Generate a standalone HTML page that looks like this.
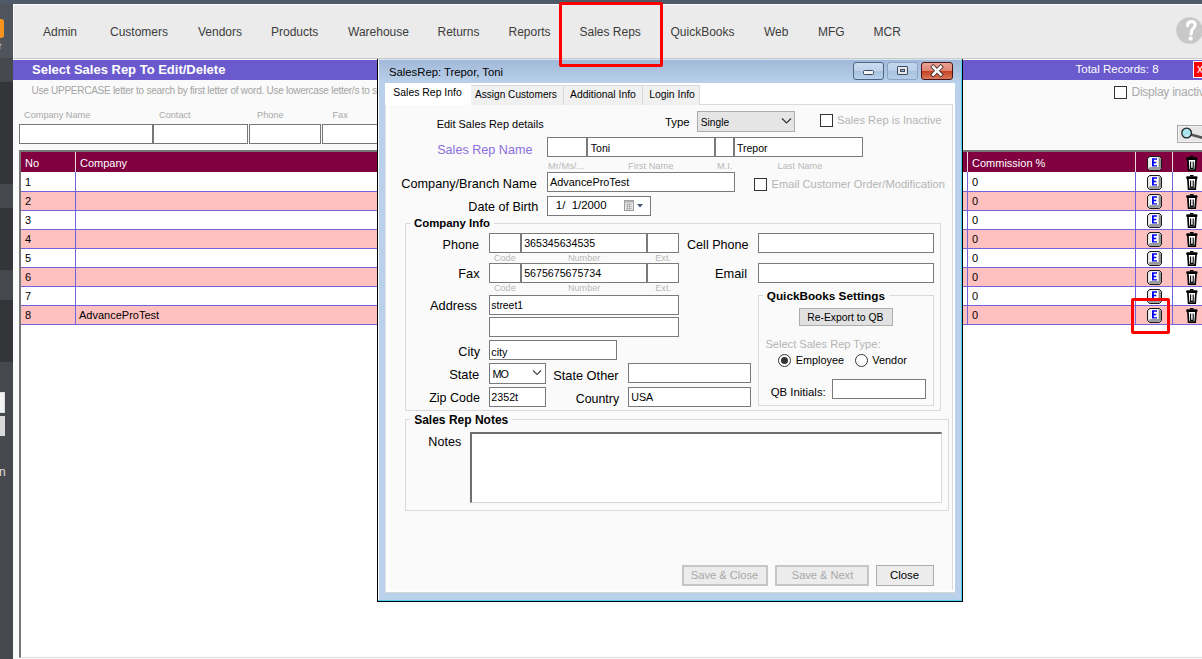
<!DOCTYPE html>
<html><head><meta charset="utf-8">
<style>
*{box-sizing:border-box;margin:0;padding:0}
html,body{width:1202px;height:659px;overflow:hidden;background:#fafafa;font-family:"Liberation Sans",sans-serif;position:relative}
.a{position:absolute}
.t{position:absolute;white-space:pre;line-height:1}
.inp{position:absolute;background:#fff;border:1px solid #7a7a7a}
</style></head><body>

<!-- top bar -->
<div class="a" style="left:0;top:0;width:1202px;height:4px;background:#4f5a69"></div>
<!-- sidebar -->
<div class="a" style="left:0;top:4px;width:13px;height:655px;background:#50545c"></div>
<div class="a" style="left:0;top:58px;width:13px;height:24px;background:#45484d"></div>
<div class="a" style="left:0;top:82px;width:13px;height:102px;background:#333538"></div>
<div class="a" style="left:0;top:184px;width:13px;height:24px;background:#45484d"></div>
<div class="a" style="left:0;top:208px;width:13px;height:62px;background:#333538"></div>
<div class="a" style="left:0;top:270px;width:13px;height:30px;background:#45484d"></div>
<div class="a" style="left:0;top:300px;width:13px;height:62px;background:#333538"></div>
<div class="a" style="left:0;top:362px;width:13px;height:297px;background:#45484d"></div>
<div class="a" style="left:-4px;top:19px;width:8px;height:19px;background:#f7941d;border-radius:3px"></div>
<div class="t" style="left:-4px;top:41px;font-size:10px;color:#bbb">e</div>
<div class="a" style="left:-2px;top:392px;width:7px;height:21px;background:#f4f4f4;border:1px solid #ddd"></div>
<div class="a" style="left:-2px;top:416px;width:7px;height:20px;background:#d8d8d8"></div>
<div class="t" style="left:-1px;top:466px;font-size:12px;color:#e0e0e0">n</div>

<!-- nav -->
<div class="a" style="left:13px;top:4px;width:1189px;height:55px;background:#ebebeb;border-top:1px solid #fff;border-left:1px solid #fff;border-bottom:1px solid #c9c9c9"></div>
<div class="t" style="left:43px;top:26px;font-size:12px;color:#3c3c3c">Admin</div>
<div class="t" style="left:110px;top:26px;font-size:12px;color:#3c3c3c">Customers</div>
<div class="t" style="left:198px;top:26px;font-size:12px;color:#3c3c3c">Vendors</div>
<div class="t" style="left:271px;top:26px;font-size:12px;color:#3c3c3c">Products</div>
<div class="t" style="left:348px;top:26px;font-size:12px;color:#3c3c3c">Warehouse</div>
<div class="t" style="left:437.5px;top:26px;font-size:12px;color:#3c3c3c">Returns</div>
<div class="t" style="left:508.5px;top:26px;font-size:12px;color:#3c3c3c">Reports</div>
<div class="t" style="left:579.5px;top:26px;font-size:12px;color:#3c3c3c">Sales Reps</div>
<div class="t" style="left:670.5px;top:26px;font-size:12px;color:#3c3c3c">QuickBooks</div>
<div class="t" style="left:764px;top:26px;font-size:12px;color:#3c3c3c">Web</div>
<div class="t" style="left:818px;top:26px;font-size:12px;color:#3c3c3c">MFG</div>
<div class="t" style="left:873.5px;top:26px;font-size:12px;color:#3c3c3c">MCR</div>
<svg class="a" style="left:1176px;top:17px" width="27" height="27" viewBox="0 0 27 27"><circle cx="13.5" cy="13.5" r="13.3" fill="#c8c8c8"/><path d="M11.6,8.6 C11.6,5.8 13.4,4.6 15.6,4.6 C17.9,4.6 19.1,6.1 19.1,8.1 C19.1,10.6 16.6,11.6 15.7,13.6 L15.1,17.3" fill="none" stroke="#fff" stroke-width="3.1" stroke-linecap="round"/><circle cx="14.6" cy="21.6" r="2.1" fill="#fff"/></svg>

<!-- purple band -->
<div class="a" style="left:13px;top:60px;width:1189px;height:20px;background:#6a5acd"></div>
<div class="t" style="left:32px;top:63px;font-size:13px;font-weight:700;color:#fff">Select Sales Rep To Edit/Delete</div>
<div class="t" style="left:1075.5px;top:64px;font-size:11.5px;color:#fff">Total Records: 8</div>
<div class="a" style="left:1193px;top:61px;width:12px;height:17px;background:#f00;border:1px solid #fff"></div>

<!-- hint and filters -->
<div class="t" style="left:31.5px;top:86px;font-size:10px;letter-spacing:-0.26px;color:#a4a4a4">Use UPPERCASE letter to search by first letter of word. Use lowercase letter/s to search</div>
<div class="a" style="left:1114px;top:86px;width:13px;height:13px;border:1px solid #333;background:#fff"></div>
<div class="t" style="left:1131.5px;top:86px;font-size:12px;letter-spacing:-0.25px;color:#aaa">Display inactive</div>
<div class="t" style="left:24px;top:111px;font-size:9.2px;color:#a8a8a8">Company Name</div>
<div class="t" style="left:159px;top:111px;font-size:9.2px;color:#a8a8a8">Contact</div>
<div class="t" style="left:257px;top:111px;font-size:9.2px;color:#a8a8a8">Phone</div>
<div class="t" style="left:332.5px;top:111px;font-size:9.2px;color:#a8a8a8">Fax</div>
<div class="inp" style="left:19px;top:124px;width:134px;height:20px;border-color:#777"></div>
<div class="inp" style="left:153px;top:124px;width:95px;height:20px;border-color:#777"></div>
<div class="inp" style="left:249px;top:124px;width:72px;height:20px;border-color:#777"></div>
<div class="inp" style="left:322px;top:124px;width:60px;height:20px;border-color:#777"></div>
<div class="a" style="left:1177px;top:125px;width:30px;height:18px;background:#e6e6e6;border:1px solid #a8a8a8;box-shadow:inset 0 0 0 1px #f2f2f2"></div>

<!-- table -->
<div id="table" class="a" style="left:19px;top:150px;width:1190px;height:508px;border-left:2px solid #777;border-top:2px solid #777;border-bottom:1px solid #ddd;background:#fff"></div>
<svg width="0" height="0" style="position:absolute"><defs>
<g id="ek"><path d="M2.5,0.5 H12.5 L14.5,2.5 V12.5 L12.5,14.5 H2.5 L0.5,12.5 V2.5 Z" fill="#b8b8b8" stroke="#1a1a1a" stroke-width="1"/>
<path d="M1.2,3 L3.5,1.2 L3.5,11 L1.2,12.5 Z" fill="#f2f2f2"/>
<path d="M11.5,1.2 L13.8,3 L13.8,12.5 L11.5,11 Z" fill="#8c8c8c"/>
<path d="M1.2,12.5 L3.5,11 L11.5,11 L13.8,12.5 L12.3,13.8 L2.7,13.8 Z" fill="#9a9a9a"/>
<rect x="3.5" y="1.2" width="8" height="9.8" fill="#fff"/>
<path d="M5,2.3 H10 V3.8 H6.8 V5.8 H9.3 V7.2 H6.8 V9.2 H10 V10.5 H5 Z" fill="#0000f0"/></g>
<g id="tr"><rect x="4" y="0" width="3.5" height="1.4" fill="#000"/>
<rect x="0.2" y="1.3" width="11.3" height="2.6" rx="1" fill="#000"/>
<path d="M1.9,3.9 L2.6,14.2 H9.2 L10,3.9" fill="#fff" stroke="#000" stroke-width="1.7"/>
<path d="M4.6,5.6 V12.4 H7.2 V5.6" fill="none" stroke="#000" stroke-width="1.1"/></g>
</defs></svg>
<div class="a" style="left:21px;top:152px;width:1181px;height:20px;background:#800040"></div>
<div class="a" style="left:75px;top:152px;width:1px;height:20px;background:#f0d8e0"></div>
<div class="a" style="left:967px;top:152px;width:1px;height:20px;background:#f0d8e0"></div>
<div class="a" style="left:1135px;top:152px;width:1px;height:20px;background:#f0d8e0"></div>
<div class="a" style="left:1172px;top:152px;width:1px;height:20px;background:#f0d8e0"></div>
<div class="t" style="left:25px;top:158px;font-size:11px;color:#fff">No</div>
<div class="t" style="left:80px;top:158px;font-size:11px;color:#fff">Company</div>
<div class="t" style="left:972px;top:158px;font-size:11px;color:#fff">Commission %</div>
<div class="a" style="left:21px;top:172px;width:1181px;height:19px;background:#fff"></div>
<div class="a" style="left:21px;top:191px;width:1181px;height:19px;background:#ffc0c0"></div>
<div class="a" style="left:21px;top:210px;width:1181px;height:19px;background:#fff"></div>
<div class="a" style="left:21px;top:229px;width:1181px;height:19px;background:#ffc0c0"></div>
<div class="a" style="left:21px;top:248px;width:1181px;height:19px;background:#fff"></div>
<div class="a" style="left:21px;top:267px;width:1181px;height:19px;background:#ffc0c0"></div>
<div class="a" style="left:21px;top:286px;width:1181px;height:19px;background:#fff"></div>
<div class="a" style="left:21px;top:305px;width:1181px;height:19px;background:#ffc0c0"></div>
<div class="a" style="left:21px;top:191px;width:1181px;height:1px;background:#7262dc"></div>
<div class="t" style="left:25px;top:177px;font-size:11px;color:#000">1</div>
<div class="t" style="left:972px;top:177px;font-size:11px;color:#000">0</div>
<div class="a" style="left:21px;top:210px;width:1181px;height:1px;background:#7262dc"></div>
<div class="t" style="left:25px;top:196px;font-size:11px;color:#000">2</div>
<div class="t" style="left:972px;top:196px;font-size:11px;color:#000">0</div>
<div class="a" style="left:21px;top:229px;width:1181px;height:1px;background:#7262dc"></div>
<div class="t" style="left:25px;top:215px;font-size:11px;color:#000">3</div>
<div class="t" style="left:972px;top:215px;font-size:11px;color:#000">0</div>
<div class="a" style="left:21px;top:248px;width:1181px;height:1px;background:#7262dc"></div>
<div class="t" style="left:25px;top:234px;font-size:11px;color:#000">4</div>
<div class="t" style="left:972px;top:234px;font-size:11px;color:#000">0</div>
<div class="a" style="left:21px;top:267px;width:1181px;height:1px;background:#7262dc"></div>
<div class="t" style="left:25px;top:253px;font-size:11px;color:#000">5</div>
<div class="t" style="left:972px;top:253px;font-size:11px;color:#000">0</div>
<div class="a" style="left:21px;top:286px;width:1181px;height:1px;background:#7262dc"></div>
<div class="t" style="left:25px;top:272px;font-size:11px;color:#000">6</div>
<div class="t" style="left:972px;top:272px;font-size:11px;color:#000">0</div>
<div class="a" style="left:21px;top:305px;width:1181px;height:1px;background:#7262dc"></div>
<div class="t" style="left:25px;top:291px;font-size:11px;color:#000">7</div>
<div class="t" style="left:972px;top:291px;font-size:11px;color:#000">0</div>
<div class="a" style="left:21px;top:324px;width:1181px;height:1px;background:#7262dc"></div>
<div class="t" style="left:25px;top:310px;font-size:11px;color:#000">8</div>
<div class="t" style="left:972px;top:310px;font-size:11px;color:#000">0</div>
<div class="t" style="left:79px;top:310px;font-size:11px;color:#000">AdvanceProTest</div>
<div class="a" style="left:75px;top:172px;width:1px;height:152px;background:#7262dc"></div>
<div class="a" style="left:967px;top:172px;width:1px;height:152px;background:#7262dc"></div>
<div class="a" style="left:1135px;top:172px;width:1px;height:152px;background:#7262dc"></div>
<div class="a" style="left:1172px;top:172px;width:1px;height:152px;background:#7262dc"></div>
<svg class="a" style="left:1147px;top:156px" width="15" height="15" viewBox="0 0 15 15"><use href="#ek"/></svg>
<svg class="a" style="left:1186px;top:156px" width="12" height="15" viewBox="0 0 12 15"><use href="#tr"/></svg>
<svg class="a" style="left:1147px;top:175px" width="15" height="15" viewBox="0 0 15 15"><use href="#ek"/></svg>
<svg class="a" style="left:1186px;top:175px" width="12" height="15" viewBox="0 0 12 15"><use href="#tr"/></svg>
<svg class="a" style="left:1147px;top:194px" width="15" height="15" viewBox="0 0 15 15"><use href="#ek"/></svg>
<svg class="a" style="left:1186px;top:194px" width="12" height="15" viewBox="0 0 12 15"><use href="#tr"/></svg>
<svg class="a" style="left:1147px;top:213px" width="15" height="15" viewBox="0 0 15 15"><use href="#ek"/></svg>
<svg class="a" style="left:1186px;top:213px" width="12" height="15" viewBox="0 0 12 15"><use href="#tr"/></svg>
<svg class="a" style="left:1147px;top:232px" width="15" height="15" viewBox="0 0 15 15"><use href="#ek"/></svg>
<svg class="a" style="left:1186px;top:232px" width="12" height="15" viewBox="0 0 12 15"><use href="#tr"/></svg>
<svg class="a" style="left:1147px;top:251px" width="15" height="15" viewBox="0 0 15 15"><use href="#ek"/></svg>
<svg class="a" style="left:1186px;top:251px" width="12" height="15" viewBox="0 0 12 15"><use href="#tr"/></svg>
<svg class="a" style="left:1147px;top:270px" width="15" height="15" viewBox="0 0 15 15"><use href="#ek"/></svg>
<svg class="a" style="left:1186px;top:270px" width="12" height="15" viewBox="0 0 12 15"><use href="#tr"/></svg>
<svg class="a" style="left:1147px;top:289px" width="15" height="15" viewBox="0 0 15 15"><use href="#ek"/></svg>
<svg class="a" style="left:1186px;top:289px" width="12" height="15" viewBox="0 0 12 15"><use href="#tr"/></svg>
<svg class="a" style="left:1147px;top:308px" width="15" height="15" viewBox="0 0 15 15"><use href="#ek"/></svg>
<svg class="a" style="left:1186px;top:308px" width="12" height="15" viewBox="0 0 12 15"><use href="#tr"/></svg>
<!--ICONS-->
<!-- dialog frame -->
<div class="a" style="left:377px;top:59px;width:586px;height:543px;background:#b9d1ea;border-left:1px solid #000;border-right:1px solid #000;border-bottom:1px solid #000"></div>
<div class="a" style="left:378px;top:59px;width:1px;height:542px;background:#fff"></div>
<div class="a" style="left:961px;top:60px;width:1px;height:541px;background:#4fd0f0"></div>
<div class="a" style="left:378px;top:600px;width:584px;height:1px;background:#4fd0f0"></div>
<div class="a" style="left:379px;top:60px;width:582px;height:23px;background:linear-gradient(#a1b9d8,#bad1eb)"></div>
<div class="a" style="left:378px;top:59px;width:584px;height:1px;background:#d8e4f2"></div>
<div class="t" style="left:389px;top:66.5px;font-size:11.3px;color:#000">SalesRep: Trepor, Toni</div>
<!-- title buttons -->
<div class="a" style="left:853px;top:62px;width:31px;height:18px;border:1px solid #4c6283;border-radius:3px;background:linear-gradient(#cadcf0 0,#bcd2ea 50%,#a6c0de 51%,#b8d0ea 100%)"></div>
<div class="a" style="left:863px;top:70px;width:11px;height:5px;background:#f4f4f4;border:1px solid #3a4a60;border-radius:1.5px"></div>
<div class="a" style="left:887px;top:62px;width:31px;height:18px;border:1px solid #8aa3c4;border-radius:3px;background:linear-gradient(#c4d7ed 0,#b9cfe8 50%,#a9c2df 51%,#b7cee8 100%)"></div>
<div class="a" style="left:897px;top:66px;width:11px;height:9px;background:#e6e6e6;border:1px solid #3a4a60;border-radius:1px"></div>
<div class="a" style="left:900px;top:69px;width:5px;height:3px;background:#9fb7d6;border:1px solid #3a4a60"></div>
<div class="a" style="left:921px;top:62px;width:32px;height:18px;border:1px solid #4a1414;border-radius:3px;background:linear-gradient(#e9a394 0,#dc8470 50%,#c4401f 51%,#d77a5e 100%)"></div>
<svg class="a" style="left:929px;top:64px" width="16" height="14" viewBox="0 0 16 14"><path d="M4.2,3 L11.8,10.6 M11.8,3 L4.2,10.6" stroke="#3a1e1e" stroke-width="4.2" stroke-linecap="square"/><path d="M4.2,3 L11.8,10.6 M11.8,3 L4.2,10.6" stroke="#fafafa" stroke-width="2.7" stroke-linecap="square"/></svg>

<!-- client area -->
<div class="a" style="left:385px;top:83px;width:570px;height:510px;background:#fff;border-left:1px solid #e0e0e0;border-bottom:1px solid #d6d6d6"></div>
<div class="a" style="left:389px;top:104px;width:564px;height:486px;background:#fafafa;border-top:1px solid #d9d9d9;border-right:1px solid #d9d9d9"></div>
<!-- tabs -->
<div class="a" style="left:470px;top:85px;width:94px;height:20px;background:#f0f0f0;border:1px solid #d9d9d9;border-bottom:none"></div>
<div class="a" style="left:563px;top:85px;width:80px;height:20px;background:#f0f0f0;border:1px solid #d9d9d9;border-bottom:none"></div>
<div class="a" style="left:642px;top:85px;width:58px;height:20px;background:#f0f0f0;border:1px solid #d9d9d9;border-bottom:none"></div>
<div class="a" style="left:385px;top:83px;width:86px;height:22px;background:#fff"></div>
<div class="t" style="left:393.3px;top:88px;font-size:10.45px;color:#000">Sales Rep Info</div>
<div class="t" style="left:475px;top:90px;font-size:10.1px;color:#000">Assign Customers</div>
<div class="t" style="left:570px;top:90px;font-size:10.4px;color:#000">Additional Info</div>
<div class="t" style="left:649.2px;top:90px;font-size:10.4px;color:#000">Login Info</div>

<!-- row: edit details / type -->
<div class="t" style="left:436.7px;top:119px;font-size:10.95px;color:#000">Edit Sales Rep details</div>
<div class="t" style="left:665px;top:117px;font-size:11.4px;color:#000">Type</div>
<div class="a" style="left:697px;top:111px;width:98px;height:21px;background:#e5e5e5;border:1px solid #acacac"></div>
<div class="t" style="left:700.8px;top:118px;font-size:10.2px;color:#000">Single</div>
<svg class="a" style="left:781px;top:117px" width="11" height="8" viewBox="0 0 11 8"><path d="M1,1.5 L5.5,6 L10,1.5" fill="none" stroke="#333" stroke-width="1.2"/></svg>
<div class="a" style="left:820px;top:114px;width:13px;height:13px;background:#fff;border:1px solid #333"></div>
<div class="t" style="left:837px;top:114.5px;font-size:11.2px;color:#b4b4b4">Sales Rep is Inactive</div>

<!-- sales rep name -->
<div class="t" style="left:437.2px;top:144px;font-size:12.6px;color:#8a6fdc">Sales Rep Name</div>
<div class="inp" style="left:547px;top:137px;width:40px;height:20px"></div>
<div class="inp" style="left:587px;top:137px;width:128px;height:20px"></div>
<div class="inp" style="left:715px;top:137px;width:19px;height:20px"></div>
<div class="inp" style="left:734px;top:137px;width:129px;height:20px"></div>
<div class="t" style="left:590.8px;top:142.5px;font-size:10.5px;color:#000">Toni</div>
<div class="t" style="left:737px;top:142.5px;font-size:10.5px;color:#000">Trepor</div>
<div class="t" style="left:548px;top:161.5px;font-size:9.3px;color:#b8b8b8">Mr/Ms/...</div>
<div class="t" style="left:628px;top:161.5px;font-size:9.3px;color:#b8b8b8">First Name</div>
<div class="t" style="left:717px;top:161.5px;font-size:9.3px;color:#b8b8b8">M.I.</div>
<div class="t" style="left:777.5px;top:162px;font-size:9.3px;color:#b8b8b8">Last Name</div>

<!-- company/branch -->
<div class="t" style="left:401.3px;top:177.5px;font-size:12.7px;color:#000">Company/Branch Name</div>
<div class="inp" style="left:547px;top:172px;width:188px;height:20px"></div>
<div class="t" style="left:550px;top:177px;font-size:10.9px;color:#000">AdvanceProTest</div>
<div class="a" style="left:754px;top:178px;width:13px;height:13px;background:#fff;border:1px solid #333"></div>
<div class="t" style="left:771.5px;top:179px;font-size:11.15px;color:#b4b4b4">Email Customer Order/Modification</div>

<!-- DOB -->
<div class="t" style="left:468.3px;top:201px;font-size:12.6px;color:#000">Date of Birth</div>
<div class="inp" style="left:547px;top:196px;width:104px;height:20px"></div>
<div class="t" style="left:555.8px;top:200px;font-size:11.4px;color:#000">1/  1/2000</div>
<svg class="a" style="left:623px;top:199px" width="24" height="14" viewBox="0 0 24 14"><rect x="1.5" y="1.5" width="9" height="10" fill="#e8e8e8" stroke="#9a9a9a"/><rect x="1.5" y="1.5" width="9" height="2" fill="#b0b0b0"/><path d="M3,5.5h6M3,7.5h6M3,9.5h6M4.5,4v7M6.5,4v7" stroke="#a0a0a0" stroke-width="0.6"/><path d="M14,5 L20,5 L17,8.5 Z" fill="#4a5a78"/></svg>

<!-- company info group -->
<div class="a" style="left:405px;top:223px;width:536px;height:188px;border:1px solid #dadada"></div>
<div class="a" style="left:410px;top:218px;width:84px;height:10px;background:#fafafa"></div>
<div class="t" style="left:414px;top:218px;font-size:11.4px;font-weight:700;color:#000">Company Info</div>

<div class="t" style="left:442.5px;top:238.5px;font-size:12.6px;color:#000">Phone</div>
<div class="inp" style="left:489px;top:233px;width:32px;height:20px"></div>
<div class="inp" style="left:521px;top:233px;width:126px;height:20px"></div>
<div class="inp" style="left:647px;top:233px;width:32px;height:20px"></div>
<div class="t" style="left:524.2px;top:238px;font-size:10.65px;color:#000">365345634535</div>
<div class="t" style="left:494px;top:254px;font-size:9.1px;color:#b8b8b8">Code</div>
<div class="t" style="left:568px;top:254px;font-size:9.1px;color:#b8b8b8">Number</div>
<div class="t" style="left:655.3px;top:254px;font-size:9.1px;color:#b8b8b8">Ext.</div>

<div class="t" style="left:458.3px;top:268px;font-size:12.8px;color:#000">Fax</div>
<div class="inp" style="left:489px;top:263px;width:32px;height:20px"></div>
<div class="inp" style="left:521px;top:263px;width:126px;height:20px"></div>
<div class="inp" style="left:647px;top:263px;width:32px;height:20px"></div>
<div class="t" style="left:524.2px;top:268px;font-size:10.65px;color:#000">5675675675734</div>
<div class="t" style="left:494px;top:284px;font-size:9.1px;color:#b8b8b8">Code</div>
<div class="t" style="left:568px;top:284px;font-size:9.1px;color:#b8b8b8">Number</div>
<div class="t" style="left:655.3px;top:284px;font-size:9.1px;color:#b8b8b8">Ext.</div>

<div class="t" style="left:687px;top:238.5px;font-size:12.6px;color:#000">Cell Phone</div>
<div class="inp" style="left:758px;top:233px;width:176px;height:20px"></div>
<div class="t" style="left:715px;top:268px;font-size:12.8px;color:#000">Email</div>
<div class="inp" style="left:758px;top:263px;width:176px;height:20px"></div>

<div class="t" style="left:430px;top:300px;font-size:12.8px;color:#000">Address</div>
<div class="inp" style="left:489px;top:295px;width:190px;height:20px"></div>
<div class="t" style="left:491.3px;top:300.5px;font-size:10.4px;color:#000">street1</div>
<div class="inp" style="left:489px;top:317px;width:190px;height:20px"></div>

<div class="t" style="left:458.3px;top:345.5px;font-size:12.6px;color:#000">City</div>
<div class="inp" style="left:489px;top:340px;width:128px;height:20px"></div>
<div class="t" style="left:491.3px;top:346.5px;font-size:10.8px;color:#000">city</div>

<div class="t" style="left:449.2px;top:369px;font-size:12.9px;color:#000">State</div>
<div class="inp" style="left:489px;top:363px;width:57px;height:21px"></div>
<div class="t" style="left:492.5px;top:368.5px;font-size:10.8px;letter-spacing:-0.9px;color:#000">MO</div>
<svg class="a" style="left:532px;top:369px" width="10" height="7" viewBox="0 0 10 7"><path d="M1,1.5 L5,5.5 L9,1.5" fill="none" stroke="#444" stroke-width="1.1"/></svg>
<div class="t" style="left:553.2px;top:369.5px;font-size:12.8px;color:#000">State Other</div>
<div class="inp" style="left:628px;top:363px;width:123px;height:20px"></div>

<div class="t" style="left:429.2px;top:392px;font-size:12.5px;color:#000">Zip Code</div>
<div class="inp" style="left:489px;top:387px;width:57px;height:20px"></div>
<div class="t" style="left:491.3px;top:392px;font-size:10.7px;color:#000">2352t</div>
<div class="t" style="left:575.7px;top:392.5px;font-size:12.4px;color:#000">Country</div>
<div class="inp" style="left:628px;top:387px;width:123px;height:20px"></div>
<div class="t" style="left:631.2px;top:392px;font-size:10.7px;color:#000">USA</div>

<!-- QB group -->
<div class="a" style="left:758px;top:295px;width:176px;height:111px;border:1px solid #dadada"></div>
<div class="a" style="left:763px;top:289px;width:126px;height:10px;background:#fafafa"></div>
<div class="t" style="left:766.8px;top:290px;font-size:11.75px;font-weight:700;color:#000">QuickBooks Settings</div>
<div class="a" style="left:799px;top:308px;width:94px;height:18px;background:#e1e1e1;border:1px solid #adadad"></div>
<div class="t" style="left:807.2px;top:313px;font-size:10.4px;color:#000">Re-Export to QB</div>
<div class="t" style="left:765.4px;top:339px;font-size:11.1px;color:#b4b4b4">Select Sales Rep Type:</div>
<div class="a" style="left:778px;top:353.5px;width:13px;height:13px;border-radius:50%;background:#fff;border:1px solid #333"></div>
<div class="a" style="left:781px;top:356.5px;width:7px;height:7px;border-radius:50%;background:#333"></div>
<div class="t" style="left:795.8px;top:355px;font-size:10.85px;color:#000">Employee</div>
<div class="a" style="left:855px;top:353.5px;width:13px;height:13px;border-radius:50%;background:#fff;border:1px solid #333"></div>
<div class="t" style="left:872.3px;top:355px;font-size:10.9px;color:#000">Vendor</div>
<div class="t" style="left:770.7px;top:387px;font-size:11.4px;color:#000">QB Initials:</div>
<div class="inp" style="left:832px;top:379px;width:94px;height:20px"></div>

<!-- notes group -->
<div class="a" style="left:405px;top:419px;width:544px;height:92px;border:1px solid #dadada"></div>
<div class="a" style="left:410px;top:413px;width:102px;height:10px;background:#fafafa"></div>
<div class="t" style="left:414.2px;top:414px;font-size:12px;font-weight:700;color:#000">Sales Rep Notes</div>
<div class="t" style="left:428.3px;top:435.5px;font-size:12.6px;color:#000">Notes</div>
<div class="a" style="left:470px;top:432px;width:472px;height:71px;background:#fff;border-top:2px solid #6e6e6e;border-left:2px solid #6e6e6e;border-right:1px solid #d8d8d8;border-bottom:1px solid #d8d8d8"></div>

<!-- buttons -->
<div class="a" style="left:682px;top:565px;width:86px;height:21px;background:#ececec;border:2px solid #c6c6c6"></div>
<div class="t" style="left:690.8px;top:570px;font-size:11.15px;color:#a8a8a8">Save &amp; Close</div>
<div class="a" style="left:775px;top:565px;width:94px;height:21px;background:#ececec;border:2px solid #c6c6c6"></div>
<div class="t" style="left:791.8px;top:570px;font-size:11.05px;color:#a8a8a8">Save &amp; Next</div>
<div class="a" style="left:876px;top:565px;width:58px;height:21px;background:#ececec;border:1px solid #adadad"></div>
<div class="t" style="left:890px;top:570px;font-size:11.4px;color:#000">Close</div>

<!-- search button icon -->
<svg class="a" style="left:1177px;top:125px" width="26" height="18" viewBox="0 0 26 18"><path d="M13.5,9.5 L26,13" stroke="#555" stroke-width="2.6"/><ellipse cx="9.6" cy="8" rx="4.8" ry="4.9" fill="#a6e4ee" stroke="#222" stroke-width="1.3"/><path d="M8,11.5 L12,9.5" stroke="#eee" stroke-width="1"/></svg>
<!-- red x in purple band -->
<div class="t" style="left:1197px;top:63px;font-size:12px;color:#fff">x</div>
<!-- red annotation boxes -->
<div class="a" style="left:559px;top:2px;width:104px;height:65px;border:3px solid #f00;border-radius:2px"></div>
<div class="a" style="left:1131px;top:298px;width:39px;height:36px;border:3px solid #f00;border-radius:2px"></div>

</body></html>
